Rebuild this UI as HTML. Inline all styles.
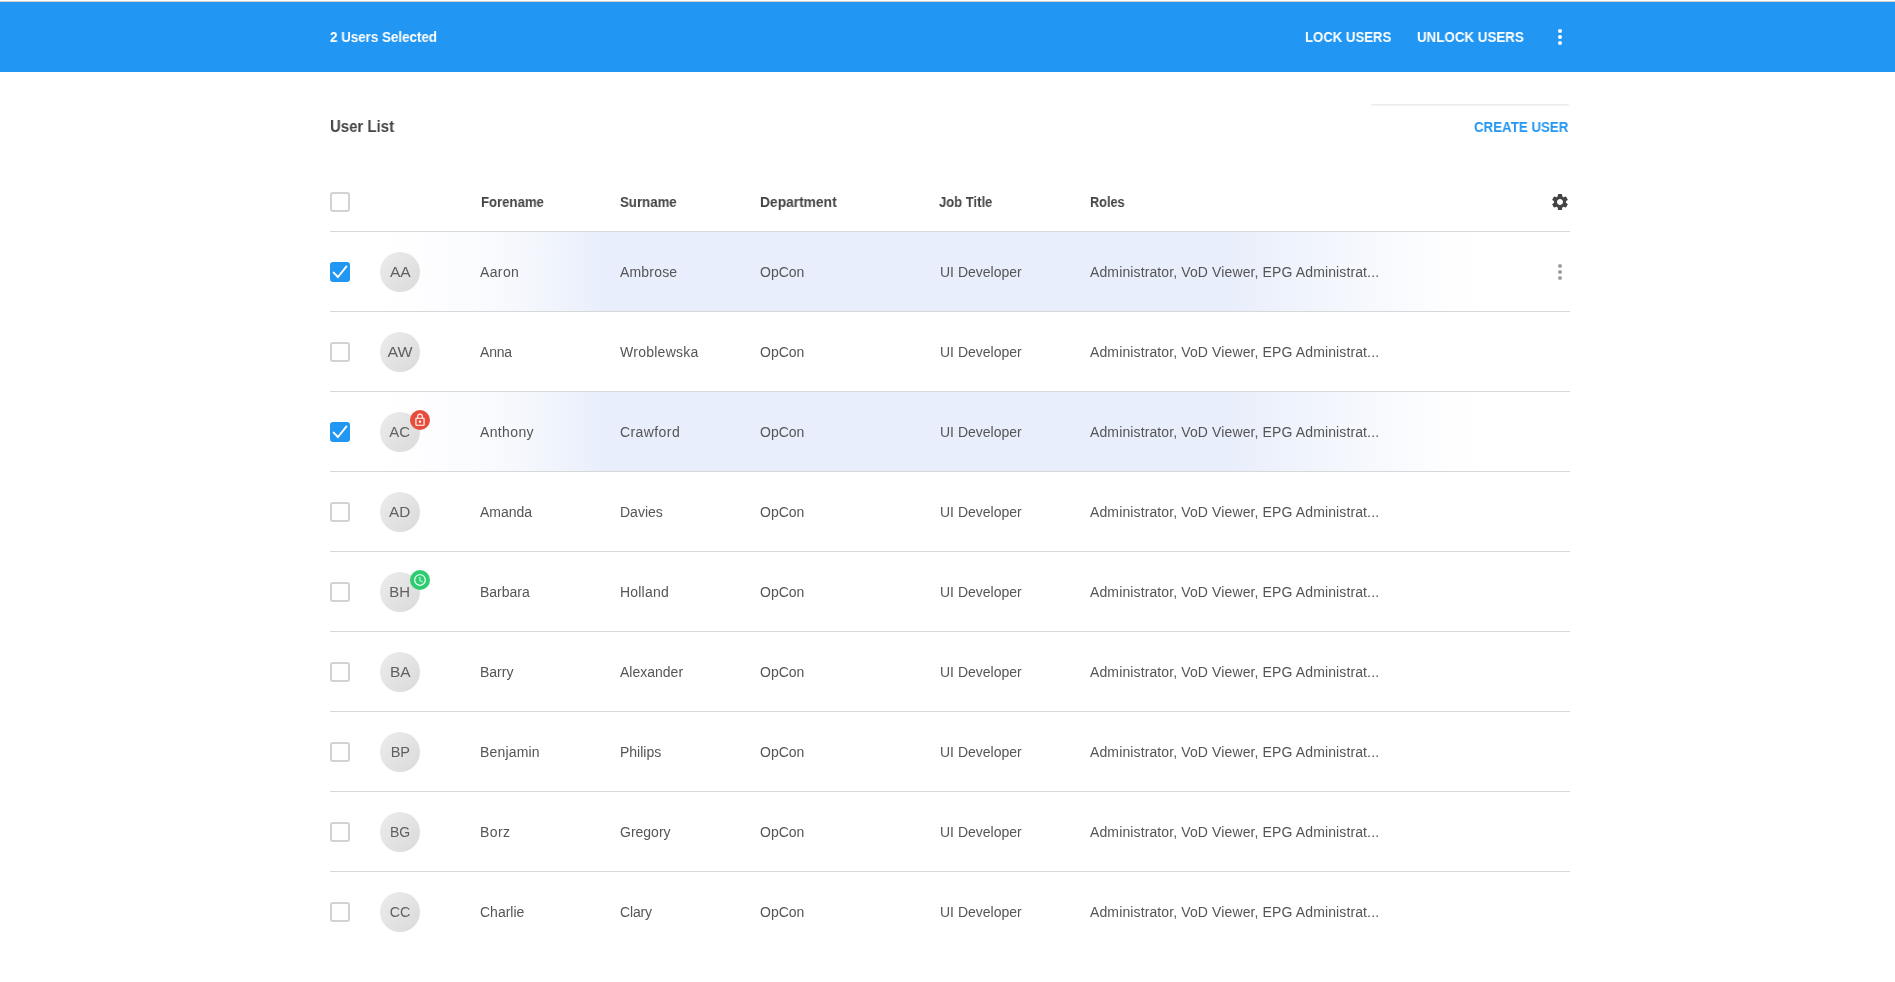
<!DOCTYPE html>
<html><head><meta charset="utf-8">
<style>
*{box-sizing:border-box;margin:0;padding:0}
html,body{width:1895px;height:982px;overflow:hidden;background:#fff}
body{-webkit-font-smoothing:antialiased;position:relative;font-family:"Liberation Sans",sans-serif;color:#555;font-size:14px}
.abs{position:absolute;white-space:nowrap;will-change:transform}
#topline{position:absolute;left:0;top:1px;width:1895px;height:1px;background:#cfcfcf}
#bar{position:absolute;left:0;top:2px;width:1895px;height:70px;background:#2196F3}
.bt{color:#fff;font-weight:bold;font-size:14px;line-height:16px;transform-origin:0 0}

.hdr{font-weight:bold;color:#444;line-height:16px;transform-origin:0 0}
.cell{line-height:16px;color:#555}
.row{position:absolute;left:330px;width:1240px;height:80px;border-top:1px solid #d8d8d8}
.row.sel{background:linear-gradient(to right,#ffffff 0px,#ffffff 30.0px,#ffffff 54.5px,#fefeff 79.0px,#fdfdff 103.5px,#fbfcfe 128.0px,#f9fbfe 152.5px,#f7f9fe 177.0px,#f4f7fd 201.5px,#f0f4fc 226.0px,#ecf1fc 250.5px,#e8eefb 275.0px,#e8eefb 900.0px,#ebf0fb 925.0px,#edf2fc 950.0px,#f0f4fc 975.0px,#f3f6fd 1000.0px,#f5f8fd 1025.0px,#f7f9fe 1050.0px,#fafbfe 1075.0px,#fcfdfe 1100.0px,#fefeff 1125.0px,#ffffff 1150.0px,#ffffff 1240px)}
.cb{position:absolute;left:330px;width:20px;height:20px;border:2px solid #d2d2d2;border-radius:3px;background:#fff}
.cb.on{border:none;background:#2196F3}
.av{position:absolute;left:380px;width:40px;height:40px;border-radius:50%;background:linear-gradient(135deg,#ececec,#dadada);color:#606060;font-size:14px;line-height:40px;text-align:center;will-change:transform}
.badge{position:absolute;left:410px;width:20px;height:20px;border-radius:50%}
</style></head><body>
<div id="topline"></div>
<div id="bar"></div>
<div class="abs bt" style="left:330px;top:29px;transform:scaleX(0.955)">2 Users Selected</div>
<div class="abs bt" style="left:1305px;top:29px;transform:scaleX(0.94)">LOCK USERS</div>
<div class="abs bt" style="left:1417px;top:29px;transform:scaleX(0.953)">UNLOCK USERS</div>
<svg class="abs" style="left:1548px;top:25px" width="24" height="24" viewBox="0 0 24 24"><circle cx="12" cy="6" r="2" fill="#fff"/><circle cx="12" cy="12" r="2" fill="#fff"/><circle cx="12" cy="18" r="2" fill="#fff"/></svg>

<div class="abs" style="left:1371px;top:103px;width:198px;height:1px;background:#fff;box-shadow:0 1px 2px rgba(0,0,0,0.17)"></div>
<div class="abs hdr" style="left:330px;top:118px;font-size:16px;line-height:18px;transform:scaleX(0.935)">User List</div>
<div class="abs bt" style="left:1474px;top:119px;color:#2196F3;transform:scaleX(0.95)">CREATE USER</div>

<div class="cb" style="top:192px"></div>
<div class="abs hdr" style="left:481px;top:194px;transform:scaleX(0.94)">Forename</div>
<div class="abs hdr" style="left:620px;top:194px;transform:scaleX(0.946)">Surname</div>
<div class="abs hdr" style="left:760px;top:194px;transform:scaleX(0.985)">Department</div>
<div class="abs hdr" style="left:939px;top:194px;transform:scaleX(0.93)">Job Title</div>
<div class="abs hdr" style="left:1090px;top:194px;transform:scaleX(0.91)">Roles</div>
<svg class="abs" style="left:1550px;top:192px" width="20" height="20" viewBox="0 0 24 24"><path fill="#444" d="M19.14 12.94c.04-.3.06-.61.06-.94 0-.32-.02-.64-.07-.94l2.03-1.58c.18-.14.23-.41.12-.61l-1.92-3.32c-.12-.22-.37-.29-.59-.22l-2.39.96c-.5-.38-1.03-.7-1.62-.94l-.36-2.54c-.04-.24-.24-.41-.48-.41h-3.84c-.24 0-.43.17-.47.41l-.36 2.54c-.59.24-1.13.57-1.62.94l-2.39-.96c-.22-.08-.47 0-.59.22L2.74 8.87c-.12.21-.08.47.12.61l2.03 1.58c-.05.3-.09.63-.09.94s.02.64.07.94l-2.03 1.58c-.18.14-.23.41-.12.61l1.92 3.32c.12.22.37.29.59.22l2.39-.96c.5.38 1.03.7 1.62.94l.36 2.54c.05.24.24.41.48.41h3.84c.24 0 .44-.17.47-.41l.36-2.54c.59-.24 1.13-.56 1.62-.94l2.39.96c.22.08.47 0 .59-.22l1.92-3.32c.12-.22.07-.47-.12-.61l-2.01-1.58zM12 15.6c-1.98 0-3.6-1.62-3.6-3.6s1.62-3.6 3.6-3.6 3.6 1.62 3.6 3.6-1.62 3.6-3.6 3.6z"/></svg>

<div id="rows"><div class="row sel" style="top:231px"></div>
<div class="cb on" style="top:262px"><svg width="20" height="20" viewBox="0 0 20 20" style="position:absolute;left:0;top:0"><path d="M3.6 10.6l4.3 4.4 8.6-10.6" fill="none" stroke="#fff" stroke-width="1.9" stroke-linecap="round" stroke-linejoin="miter"/></svg></div>
<div class="av" style="top:252px"><span style="display:inline-block;transform:scaleX(1.11)">AA</span></div>
<div class="abs cell" style="left:480px;top:264px;letter-spacing:0.37px">Aaron</div>
<div class="abs cell" style="left:620px;top:264px;letter-spacing:0.18px">Ambrose</div>
<div class="abs cell" style="left:760px;top:264px">OpCon</div>
<div class="abs cell" style="left:940px;top:264px">UI Developer</div>
<div class="abs cell" style="left:1090px;top:264px;letter-spacing:0.12px">Administrator, VoD Viewer, EPG Administrat...</div>
<svg class="abs" style="left:1548px;top:260px" width="24" height="24" viewBox="0 0 24 24"><circle cx="12" cy="6" r="2" fill="#9e9e9e"/><circle cx="12" cy="12" r="2" fill="#9e9e9e"/><circle cx="12" cy="18" r="2" fill="#9e9e9e"/></svg>
<div class="row" style="top:311px"></div>
<div class="cb" style="top:342px"></div>
<div class="av" style="top:332px"><span style="display:inline-block;transform:scaleX(1.136)">AW</span></div>
<div class="abs cell" style="left:480px;top:344px;letter-spacing:-0.2px">Anna</div>
<div class="abs cell" style="left:620px;top:344px;letter-spacing:0.26px">Wroblewska</div>
<div class="abs cell" style="left:760px;top:344px">OpCon</div>
<div class="abs cell" style="left:940px;top:344px">UI Developer</div>
<div class="abs cell" style="left:1090px;top:344px;letter-spacing:0.12px">Administrator, VoD Viewer, EPG Administrat...</div>
<div class="row sel" style="top:391px"></div>
<div class="cb on" style="top:422px"><svg width="20" height="20" viewBox="0 0 20 20" style="position:absolute;left:0;top:0"><path d="M3.6 10.6l4.3 4.4 8.6-10.6" fill="none" stroke="#fff" stroke-width="1.9" stroke-linecap="round" stroke-linejoin="miter"/></svg></div>
<div class="av" style="top:412px"><span style="display:inline-block;transform:scaleX(1.07)">AC</span></div>
<div class="badge" style="top:410px;background:#e74c3c"><svg width="14" height="14" viewBox="0 0 24 24" style="position:absolute;left:3px;top:3px"><path fill="#fff" d="M12 17c1.1 0 2-.9 2-2s-.9-2-2-2-2 .9-2 2 .9 2 2 2zm6-9h-1V6c0-2.76-2.24-5-5-5S7 3.24 7 6v2H6c-1.1 0-2 .9-2 2v10c0 1.1.9 2 2 2h12c1.1 0 2-.9 2-2V10c0-1.1-.9-2-2-2zM8.9 6c0-1.71 1.39-3.1 3.1-3.1s3.1 1.39 3.1 3.1v2H8.9V6zM18 20H6V10h12v10z"/></svg></div>
<div class="abs cell" style="left:480px;top:424px;letter-spacing:0.37px">Anthony</div>
<div class="abs cell" style="left:620px;top:424px;letter-spacing:0.41px">Crawford</div>
<div class="abs cell" style="left:760px;top:424px">OpCon</div>
<div class="abs cell" style="left:940px;top:424px">UI Developer</div>
<div class="abs cell" style="left:1090px;top:424px;letter-spacing:0.12px">Administrator, VoD Viewer, EPG Administrat...</div>
<div class="row" style="top:471px"></div>
<div class="cb" style="top:502px"></div>
<div class="av" style="top:492px"><span style="display:inline-block;transform:scaleX(1.09)">AD</span></div>
<div class="abs cell" style="left:480px;top:504px;letter-spacing:0px">Amanda</div>
<div class="abs cell" style="left:620px;top:504px;letter-spacing:0px">Davies</div>
<div class="abs cell" style="left:760px;top:504px">OpCon</div>
<div class="abs cell" style="left:940px;top:504px">UI Developer</div>
<div class="abs cell" style="left:1090px;top:504px;letter-spacing:0.12px">Administrator, VoD Viewer, EPG Administrat...</div>
<div class="row" style="top:551px"></div>
<div class="cb" style="top:582px"></div>
<div class="av" style="top:572px"><span style="display:inline-block;transform:scaleX(1.065)">BH</span></div>
<div class="badge" style="top:570px;background:#2ecc71"><svg width="14" height="14" viewBox="0 0 24 24" style="position:absolute;left:3px;top:3px"><path fill="#fff" d="M11.99 2C6.47 2 2 6.48 2 12s4.47 10 9.99 10C17.52 22 22 17.52 22 12S17.52 2 11.99 2zM12 20c-4.42 0-8-3.58-8-8s3.58-8 8-8 8 3.58 8 8-3.58 8-8 8zm.5-13H11v6l5.25 3.15.75-1.23-4.5-2.67z"/></svg></div>
<div class="abs cell" style="left:480px;top:584px;letter-spacing:0px">Barbara</div>
<div class="abs cell" style="left:620px;top:584px;letter-spacing:0.2px">Holland</div>
<div class="abs cell" style="left:760px;top:584px">OpCon</div>
<div class="abs cell" style="left:940px;top:584px">UI Developer</div>
<div class="abs cell" style="left:1090px;top:584px;letter-spacing:0.12px">Administrator, VoD Viewer, EPG Administrat...</div>
<div class="row" style="top:631px"></div>
<div class="cb" style="top:662px"></div>
<div class="av" style="top:652px"><span style="display:inline-block;transform:scaleX(1.105)">BA</span></div>
<div class="abs cell" style="left:480px;top:664px;letter-spacing:0px">Barry</div>
<div class="abs cell" style="left:620px;top:664px;letter-spacing:0px">Alexander</div>
<div class="abs cell" style="left:760px;top:664px">OpCon</div>
<div class="abs cell" style="left:940px;top:664px">UI Developer</div>
<div class="abs cell" style="left:1090px;top:664px;letter-spacing:0.12px">Administrator, VoD Viewer, EPG Administrat...</div>
<div class="row" style="top:711px"></div>
<div class="cb" style="top:742px"></div>
<div class="av" style="top:732px"><span style="display:inline-block;transform:scaleX(1.04)">BP</span></div>
<div class="abs cell" style="left:480px;top:744px;letter-spacing:0.17px">Benjamin</div>
<div class="abs cell" style="left:620px;top:744px;letter-spacing:0px">Philips</div>
<div class="abs cell" style="left:760px;top:744px">OpCon</div>
<div class="abs cell" style="left:940px;top:744px">UI Developer</div>
<div class="abs cell" style="left:1090px;top:744px;letter-spacing:0.12px">Administrator, VoD Viewer, EPG Administrat...</div>
<div class="row" style="top:791px"></div>
<div class="cb" style="top:822px"></div>
<div class="av" style="top:812px"><span style="display:inline-block;transform:scaleX(1.0)">BG</span></div>
<div class="abs cell" style="left:480px;top:824px;letter-spacing:0.4px">Borz</div>
<div class="abs cell" style="left:620px;top:824px;letter-spacing:0px">Gregory</div>
<div class="abs cell" style="left:760px;top:824px">OpCon</div>
<div class="abs cell" style="left:940px;top:824px">UI Developer</div>
<div class="abs cell" style="left:1090px;top:824px;letter-spacing:0.12px">Administrator, VoD Viewer, EPG Administrat...</div>
<div class="row" style="top:871px"></div>
<div class="cb" style="top:902px"></div>
<div class="av" style="top:892px"><span style="display:inline-block;transform:scaleX(1.02)">CC</span></div>
<div class="abs cell" style="left:480px;top:904px;letter-spacing:0px">Charlie</div>
<div class="abs cell" style="left:620px;top:904px;letter-spacing:-0.15px">Clary</div>
<div class="abs cell" style="left:760px;top:904px">OpCon</div>
<div class="abs cell" style="left:940px;top:904px">UI Developer</div>
<div class="abs cell" style="left:1090px;top:904px;letter-spacing:0.12px">Administrator, VoD Viewer, EPG Administrat...</div></div>
</body></html>
